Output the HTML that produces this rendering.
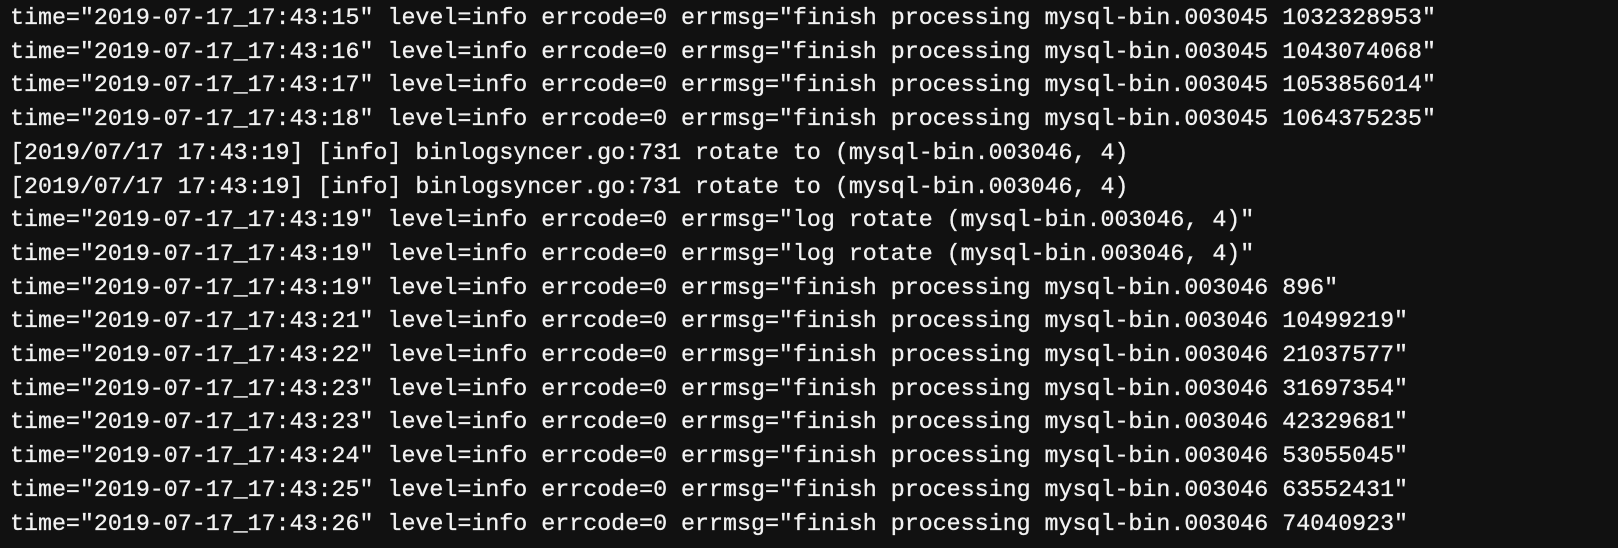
<!DOCTYPE html>
<html><head><meta charset="utf-8"><style>
html,body{margin:0;padding:0;background:#111111;width:1618px;height:548px;overflow:hidden}
pre{margin:0;padding:2px 0 0 10px;color:#f2f2f2;font-family:"Liberation Mono","DejaVu Sans Mono",monospace;font-size:23.3px;line-height:33.7px;-webkit-text-stroke:0.3px #f2f2f2}
</style></head><body><pre>time="2019-07-17_17:43:15" level=info errcode=0 errmsg="finish processing mysql-bin.003045 1032328953"
time="2019-07-17_17:43:16" level=info errcode=0 errmsg="finish processing mysql-bin.003045 1043074068"
time="2019-07-17_17:43:17" level=info errcode=0 errmsg="finish processing mysql-bin.003045 1053856014"
time="2019-07-17_17:43:18" level=info errcode=0 errmsg="finish processing mysql-bin.003045 1064375235"
[2019/07/17 17:43:19] [info] binlogsyncer.go:731 rotate to (mysql-bin.003046, 4)
[2019/07/17 17:43:19] [info] binlogsyncer.go:731 rotate to (mysql-bin.003046, 4)
time="2019-07-17_17:43:19" level=info errcode=0 errmsg="log rotate (mysql-bin.003046, 4)"
time="2019-07-17_17:43:19" level=info errcode=0 errmsg="log rotate (mysql-bin.003046, 4)"
time="2019-07-17_17:43:19" level=info errcode=0 errmsg="finish processing mysql-bin.003046 896"
time="2019-07-17_17:43:21" level=info errcode=0 errmsg="finish processing mysql-bin.003046 10499219"
time="2019-07-17_17:43:22" level=info errcode=0 errmsg="finish processing mysql-bin.003046 21037577"
time="2019-07-17_17:43:23" level=info errcode=0 errmsg="finish processing mysql-bin.003046 31697354"
time="2019-07-17_17:43:23" level=info errcode=0 errmsg="finish processing mysql-bin.003046 42329681"
time="2019-07-17_17:43:24" level=info errcode=0 errmsg="finish processing mysql-bin.003046 53055045"
time="2019-07-17_17:43:25" level=info errcode=0 errmsg="finish processing mysql-bin.003046 63552431"
time="2019-07-17_17:43:26" level=info errcode=0 errmsg="finish processing mysql-bin.003046 74040923"</pre></body></html>
